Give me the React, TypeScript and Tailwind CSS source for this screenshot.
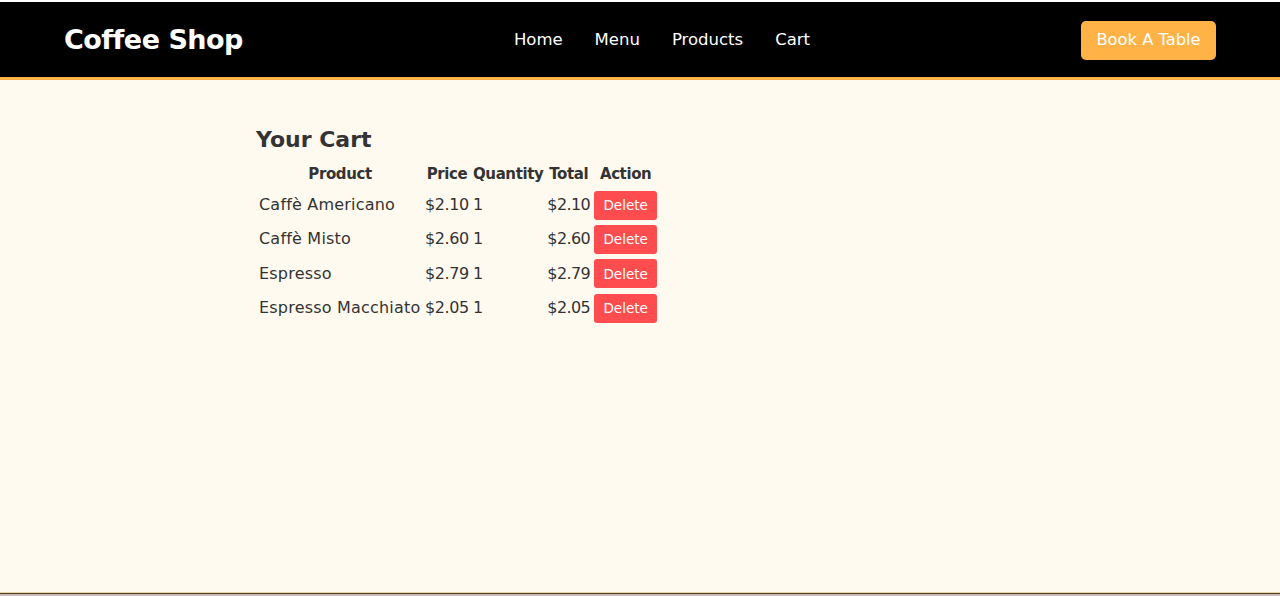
const items = [
  { name: "Caffè Americano", price: 2.1, qty: 1 },
  { name: "Caffè Misto", price: 2.6, qty: 1 },
  { name: "Espresso", price: 2.79, qty: 1 },
  { name: "Espresso Macchiato", price: 2.05, qty: 1 },
];

const font = { fontFamily: '"DejaVu Sans", "Noto Sans", sans-serif' };

export default function App() {
  return (
    <div className="min-h-[596px] flex flex-col bg-[#fffaf0] text-[#333]" style={font}>
      <div className="h-[2px] bg-white" />
      <header className="h-[78px] bg-black border-b-[3px] border-[#ffb347] flex items-center justify-between px-16 pt-[2px]">
        <h1 className="text-[27px] font-bold text-white tracking-[-0.5px]">Coffee Shop</h1>
        <nav className="flex items-center gap-[32px] text-[16.5px] text-white">
          <a>Home</a>
          <a>Menu</a>
          <a>Products</a>
          <a>Cart</a>
        </nav>
        <button className="h-[39px] w-[135px] rounded-[5px] bg-[#ffb347] text-[16.3px] text-white -mt-[1px]">
          Book A Table
        </button>
      </header>

      <main className="flex-1 w-[768px] mx-auto pt-[44px]">
        <h2 className="text-[22px] font-bold leading-8 mb-[3px]">Your Cart</h2>
        <table className="border-separate border-spacing-[2px] text-[16px]">
          <thead>
            <tr className="font-bold text-[15px] tracking-[-0.4px]">
              <th className="p-[1px] h-[26px] w-[164px]">Product</th>
              <th className="p-[1px] w-[46px]">Price</th>
              <th className="p-[1px] w-[72px]">Quantity</th>
              <th className="p-[1px] w-[42px]">Total</th>
              <th className="p-[1px] w-[65px]">Action</th>
            </tr>
          </thead>
          <tbody>
            {items.map((item) => (
              <tr key={item.name}>
                <td className="p-[1px] h-[32.3px] whitespace-nowrap tracking-[0.2px]">{item.name}</td>
                <td className="p-[1px] tracking-[-0.4px]">${item.price.toFixed(2)}</td>
                <td className="p-[1px]">{item.qty}</td>
                <td className="p-[1px] tracking-[-0.6px]">${(item.price * item.qty).toFixed(2)}</td>
                <td className="p-[1px]">
                  <button className="h-[29px] w-[63px] rounded-[3px] bg-[#ff4d4f] text-[13.5px] text-white">
                    Delete
                  </button>
                </td>
              </tr>
            ))}
          </tbody>
        </table>
      </main>

      <div className="h-[1px] bg-[#e8dcae]" />
      <div className="h-[1px] bg-[#4d3b1c]" />
      <div className="h-[2px] bg-[#c9bcbc]" />
    </div>
  );
}
